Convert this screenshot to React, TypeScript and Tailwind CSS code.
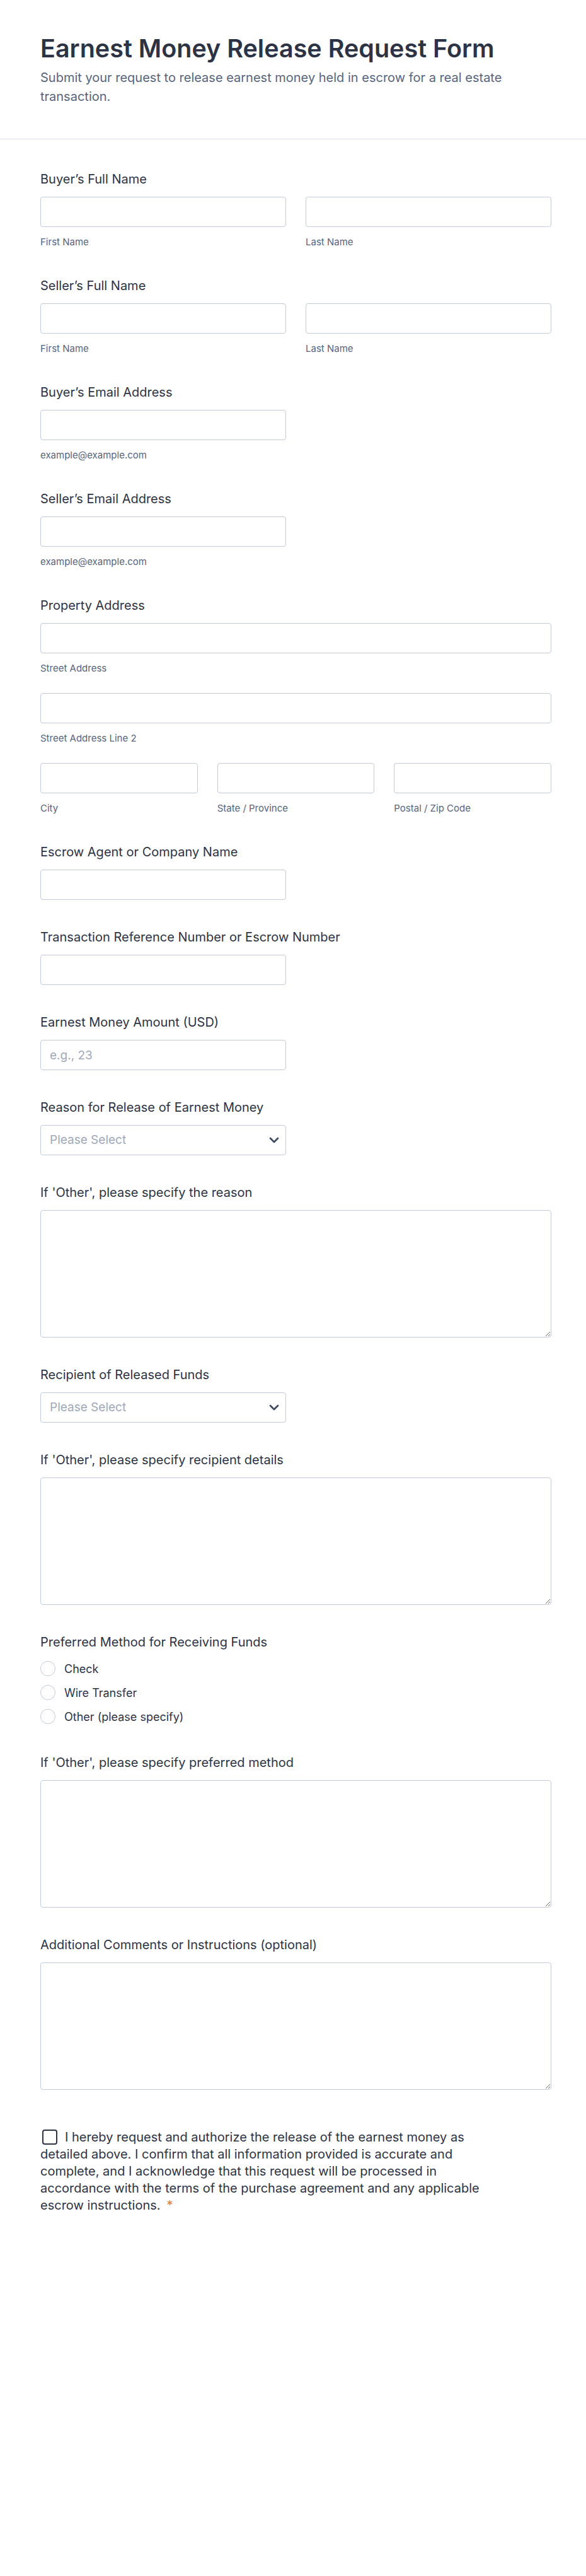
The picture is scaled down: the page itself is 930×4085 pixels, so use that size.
import React from 'react';
import { ChevronDown } from 'lucide-react';

const Label = ({ children }: { children: React.ReactNode }) => (
  <label className="block text-[20px] leading-[28px] font-normal text-[#2c3345]">{children}</label>
);

const SubLabel = ({ children }: { children: React.ReactNode }) => (
  <span className="block mt-[14px] text-[15px] leading-[20px] text-[#57647e]">{children}</span>
);

const TextInput = ({ placeholder }: { placeholder?: string }) => (
  <input
    type="text"
    placeholder={placeholder}
    className="block w-full h-12 rounded border border-[#c3cad8] bg-white px-[14px] text-[19px] text-[#2c3345] placeholder:text-[#a0a8ba] outline-none"
  />
);

const SelectBox = () => (
  <div className="relative">
    <select
      defaultValue=""
      className="block w-full h-12 appearance-none rounded border border-[#c3cad8] bg-white pl-[14px] pr-10 text-[19px] text-[#a0a8ba] outline-none"
    >
      <option value="">Please Select</option>
    </select>
    <ChevronDown className="absolute right-[7px] top-3 h-6 w-6 text-[#3e4a63] pointer-events-none" strokeWidth={2.75} />
  </div>
);

const TextArea = () => (
  <textarea className="block w-full h-[202px] rounded border border-[#c3cad8] bg-white p-3 text-[19px] text-[#2c3345] outline-none" />
);

const Radio = ({ label }: { label: string }) => (
  <label className="flex items-center h-[28px] gap-[14px]">
    <input
      type="radio"
      name="method"
      className="appearance-none h-6 w-6 rounded-full border border-[#c3cad8] bg-white"
    />
    <span className="text-[18px] text-[#2c3345]">{label}</span>
  </label>
);

export default function App() {
  return (
    <div className="min-h-screen bg-white font-['Inter',sans-serif]">
      <header className="pl-16 pr-[55px] pt-[55px] pb-[52px] border-b border-[#d8dce6]">
        <h1 className="text-[39.5px] leading-[44px] font-semibold text-[#2c3345]">
          Earnest Money Release Request Form
        </h1>
        <p className="mt-[9px] text-[20px] leading-[30px] text-[#57647e]">
          Submit your request to release earnest money held in escrow for a real estate transaction.
        </p>
      </header>

      <form className="pl-16 pr-[55px] pt-[49px] pb-24 flex flex-col gap-[45px]">
        <div>
          <Label>Buyer’s Full Name</Label>
          <div className="mt-[14px] grid grid-cols-2 gap-x-[31px]">
            <div>
              <TextInput />
              <SubLabel>First Name</SubLabel>
            </div>
            <div>
              <TextInput />
              <SubLabel>Last Name</SubLabel>
            </div>
          </div>
        </div>

        <div>
          <Label>Seller’s Full Name</Label>
          <div className="mt-[14px] grid grid-cols-2 gap-x-[31px]">
            <div>
              <TextInput />
              <SubLabel>First Name</SubLabel>
            </div>
            <div>
              <TextInput />
              <SubLabel>Last Name</SubLabel>
            </div>
          </div>
        </div>

        <div>
          <Label>Buyer’s Email Address</Label>
          <div className="mt-[14px] grid grid-cols-2 gap-x-[31px]">
            <div>
              <TextInput />
              <SubLabel>example@example.com</SubLabel>
            </div>
          </div>
        </div>

        <div>
          <Label>Seller’s Email Address</Label>
          <div className="mt-[14px] grid grid-cols-2 gap-x-[31px]">
            <div>
              <TextInput />
              <SubLabel>example@example.com</SubLabel>
            </div>
          </div>
        </div>

        <div>
          <Label>Property Address</Label>
          <div className="mt-[14px]">
            <TextInput />
            <SubLabel>Street Address</SubLabel>
          </div>
          <div className="mt-[29px]">
            <TextInput />
            <SubLabel>Street Address Line 2</SubLabel>
          </div>
          <div className="mt-[29px] grid grid-cols-3 gap-x-[31px]">
            <div>
              <TextInput />
              <SubLabel>City</SubLabel>
            </div>
            <div>
              <TextInput />
              <SubLabel>State / Province</SubLabel>
            </div>
            <div>
              <TextInput />
              <SubLabel>Postal / Zip Code</SubLabel>
            </div>
          </div>
        </div>

        <div>
          <Label>Escrow Agent or Company Name</Label>
          <div className="mt-[14px] grid grid-cols-2 gap-x-[31px]">
            <TextInput />
          </div>
        </div>

        <div>
          <Label>Transaction Reference Number or Escrow Number</Label>
          <div className="mt-[14px] grid grid-cols-2 gap-x-[31px]">
            <TextInput />
          </div>
        </div>

        <div>
          <Label>Earnest Money Amount (USD)</Label>
          <div className="mt-[14px] grid grid-cols-2 gap-x-[31px]">
            <TextInput placeholder="e.g., 23" />
          </div>
        </div>

        <div>
          <Label>Reason for Release of Earnest Money</Label>
          <div className="mt-[14px] grid grid-cols-2 gap-x-[31px]">
            <SelectBox />
          </div>
        </div>

        <div>
          <Label>If 'Other', please specify the reason</Label>
          <div className="mt-[14px]">
            <TextArea />
          </div>
        </div>

        <div>
          <Label>Recipient of Released Funds</Label>
          <div className="mt-[14px] grid grid-cols-2 gap-x-[31px]">
            <SelectBox />
          </div>
        </div>

        <div>
          <Label>If 'Other', please specify recipient details</Label>
          <div className="mt-[14px]">
            <TextArea />
          </div>
        </div>

        <div>
          <Label>Preferred Method for Receiving Funds</Label>
          <div className="mt-[14px] flex flex-col gap-[10px]">
            <Radio label="Check" />
            <Radio label="Wire Transfer" />
            <Radio label="Other (please specify)" />
          </div>
        </div>

        <div>
          <Label>If 'Other', please specify preferred method</Label>
          <div className="mt-[14px]">
            <TextArea />
          </div>
        </div>

        <div>
          <Label>Additional Comments or Instructions (optional)</Label>
          <div className="mt-[14px]">
            <TextArea />
          </div>
        </div>

        <div className="mt-[17px] max-w-[720px]">
          <p className="text-[20px] leading-[27px] text-[#2c3345]">
            <input
              type="checkbox"
              className="appearance-none inline-block align-middle ml-[3px] mr-3 h-6 w-6 rounded-[4px] border-2 border-[#2c3345] bg-white -mt-[3px]"
            />
            I hereby request and authorize the release of the earnest money as detailed above. I confirm that all
            information provided is accurate and complete, and I acknowledge that this request will be processed in
            accordance with the terms of the purchase agreement and any applicable escrow instructions.
            <span className="ml-[10px] text-[#e07b39]">*</span>
          </p>
        </div>
      </form>
    </div>
  );
}
